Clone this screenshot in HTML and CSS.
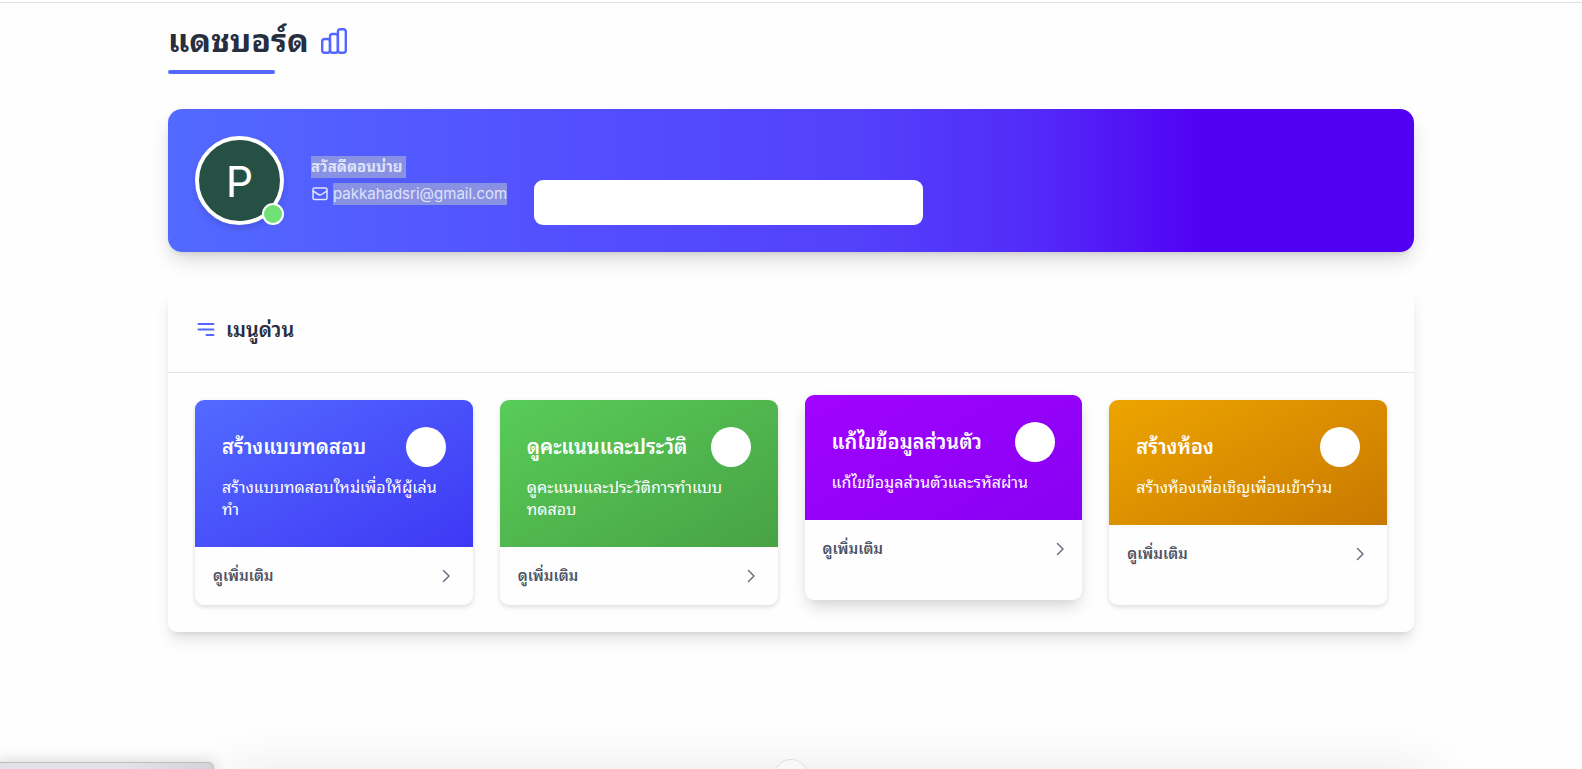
FILE: index.html
```html
<!DOCTYPE html>
<html lang="th">
<head>
<meta charset="utf-8">
<title>แดชบอร์ด</title>
<link rel="stylesheet" href="styles.css">
</head>
<body>
<div class="topbar"></div>
<main class="container">
  <header class="page-head">
    <h1 class="page-title">แดชบอร์ด
      <svg class="title-icon" viewBox="0 0 26 26" fill="none" stroke="currentColor" stroke-width="2.4"><rect x="1.200" y="11" width="7.800" height="13.800" rx="2.500"/><rect x="9" y="6" width="7.900" height="18.800" rx="2.500"/><rect x="16.900" y="1.200" width="7.900" height="23.600" rx="2.500"/></svg>
    </h1>
    <div class="underline"></div>
  </header>

  <section class="banner">
    <div class="avatar">P<span class="status"></span></div>
    <div class="who">
      <p class="line"><span class="mark greeting">สวัสดีตอนบ่าย&nbsp;</span></p>
      <p class="line"><svg class="mail" viewBox="0 0 18 18" fill="none" stroke="currentColor" stroke-width="1.5" stroke-linecap="round" stroke-linejoin="round"><rect x="2" y="3" width="14" height="11.500" rx="1.500"/><path d="M2 6 7.500 9.500Q9 10.500 10.500 9.500L16 6"/></svg><span class="mark email">pakkahadsri@gmail.com</span></p>
    </div>
    <div class="blank"></div>
  </section>

  <section class="panel">
    <h2 class="panel-head">
      <svg class="menu-icon" viewBox="0 0 22 22" fill="none" stroke="currentColor" stroke-width="2" stroke-linecap="round"><path d="M3.500 5H18.500M3.500 10.500H18.500M11.500 16H18.500"/></svg>
      เมนูด่วน
    </h2>
    <div class="cards">
      <a class="card" href="#create">
        <div class="card-top blue">
          <div class="card-row"><h3 class="card-title">สร้างแบบทดสอบ</h3><span class="disc"></span></div>
          <p class="desc">สร้างแบบทดสอบใหม่เพื่อให้ผู้เล่น<br>ทำ</p>
        </div>
        <div class="card-foot end-wide">ดูเพิ่มเติม<svg class="chevron" viewBox="0 0 18 18"><path d="M6.500 3.500 12 9 6.500 14.500"/></svg></div>
      </a>
      <a class="card" href="#scores">
        <div class="card-top green">
          <div class="card-row"><h3 class="card-title">ดูคะแนนและประวัติ</h3><span class="disc"></span></div>
          <p class="desc">ดูคะแนนและประวัติการทำแบบ<br>ทดสอบ</p>
        </div>
        <div class="card-foot end-wide">ดูเพิ่มเติม<svg class="chevron" viewBox="0 0 18 18"><path d="M6.500 3.500 12 9 6.500 14.500"/></svg></div>
      </a>
      <a class="card raised" href="#profile">
        <div class="card-top purple">
          <div class="card-row"><h3 class="card-title">แก้ไขข้อมูลส่วนตัว</h3><span class="disc"></span></div>
          <p class="desc">แก้ไขข้อมูลส่วนตัวและรหัสผ่าน</p>
        </div>
        <div class="card-foot">ดูเพิ่มเติม<svg class="chevron" viewBox="0 0 18 18"><path d="M6.500 3.500 12 9 6.500 14.500"/></svg></div>
      </a>
      <a class="card" href="#room">
        <div class="card-top orange">
          <div class="card-row"><h3 class="card-title">สร้างห้อง</h3><span class="disc"></span></div>
          <p class="desc">สร้างห้องเพื่อเชิญเพื่อนเข้าร่วม</p>
        </div>
        <div class="card-foot end-wide">ดูเพิ่มเติม<svg class="chevron" viewBox="0 0 18 18"><path d="M6.500 3.500 12 9 6.500 14.500"/></svg></div>
      </a>
    </div>
  </section>
</main>
<div class="dock-shade"></div>
<div class="status-bubble"></div>
<div class="round-handle"></div>
</body>
</html>
```
FILE: styles.css
```css
* { box-sizing: border-box; }
html, body { height: 100%; }
body {
  margin: 0;
  overflow: hidden;
  background: #fefefe;
  color: #272e3f;
  font-family: Inter, "Noto Sans Thai Looped", "Noto Looped Thai", Sarabun, Loma, Garuda, Waree, "Noto Sans Thai", sans-serif;
  font-size: 16px;
  line-height: 22px;
}
h1, h2, h3, p { margin: 0; }
.topbar { height: 3px; border-bottom: 1px solid #e2e2e4; }
.container { max-width: 1246px; margin: 0 auto; }
.page-head { padding-top: 18px; }
.page-title {
  display: flex;
  align-items: center;
  gap: 12px;
  font-size: 32px;
  line-height: 40px;
  font-weight: 700;
}
.title-icon { width: 26px; height: 26px; color: #5468ff; }
.underline {
  width: 107px;
  height: 4px;
  margin-top: 9px;
  border-radius: 2px;
  background: #5468ff;
}
.banner {
  display: flex;
  align-items: center;
  gap: 27px;
  margin-top: 35px;
  padding: 27px;
  border-radius: 14px;
  background: linear-gradient(90deg, #526aff 0%, #5352ff 28%, #5340fb 56%, #522af8 70%, #5200f4 83%, #5200f4 100%);
  box-shadow: 0 10px 20px -3px rgba(0, 0, 0, .16), 0 3px 6px -3px rgba(0, 0, 0, .14);
}
.avatar {
  position: relative;
  display: flex;
  align-items: center;
  justify-content: center;
  width: 89px;
  height: 89px;
  border: 4px solid #fff;
  border-radius: 50%;
  background: #275044;
  color: #fff;
  font-size: 43px;
  box-shadow: 0 4px 6px rgba(0, 0, 0, .12);
}
.status {
  position: absolute;
  right: -4px;
  bottom: -4px;
  width: 22px;
  height: 22px;
  border: 2px solid #fff;
  border-radius: 50%;
  background: #70e077;
}
.who { display: grid; gap: 5px; }
.line { display: flex; align-items: center; gap: 4px; color: #dfe3fb; }
.mark { background: #8991e2; font-size: 15px; }
.greeting { font-weight: 700; }
.mail { width: 18px; height: 18px; }
.blank {
  align-self: flex-end;
  width: 389px;
  height: 45px;
  border-radius: 9px;
  background: #fff;
}
.panel {
  margin-top: 36px;
  border-radius: 9px;
  background: #fefefe;
  box-shadow: 0 10px 16px -3px rgba(0, 0, 0, .12), 0 4px 6px -4px rgba(0, 0, 0, .12);
}
.panel-head {
  display: flex;
  align-items: center;
  gap: 9px;
  padding: 27px;
  border-bottom: 1px solid #e4e5e9;
  font-size: 20px;
  line-height: 30px;
  font-weight: 600;
}
.menu-icon { width: 22px; height: 22px; color: #5468ff; }
.cards {
  display: grid;
  grid-template-columns: repeat(4, minmax(0, 1fr));
  gap: 27px;
  padding: 27px;
}
.card {
  overflow: hidden;
  border-radius: 9px;
  background: #fefefe;
  color: #4c5365;
  text-decoration: none;
  box-shadow: 0 2px 5px rgba(0, 0, 0, .14);
}
.raised {
  transform: translateY(-5px);
  box-shadow: 0 9px 16px -3px rgba(0, 0, 0, .16), 0 0 8px rgba(0, 0, 0, .04);
}
.card-top { padding: 27px; color: #fff; }
.blue { background: linear-gradient(150deg, #536aff, #3e38f5); }
.green { background: linear-gradient(150deg, #58cc59, #48a244); }
.purple { background: linear-gradient(150deg, #a103ff, #8800f2); }
.orange { background: linear-gradient(150deg, #eda500, #c97800); }
.card-row {
  display: flex;
  align-items: center;
  justify-content: space-between;
  margin-bottom: 9px;
}
.card-title { font-size: 20px; line-height: 30px; font-weight: 600; white-space: nowrap; }
.disc { flex: none; width: 40px; height: 40px; border-radius: 50%; background: #fff; }
.desc { font-weight: 400; white-space: nowrap; }
.card-foot {
  display: flex;
  align-items: center;
  justify-content: space-between;
  padding: 18px 13px 18px 18px;
  font-size: 15px;
  font-weight: 600;
}
.end-wide { padding-right: 18px; }
.chevron {
  width: 18px;
  height: 18px;
  fill: none;
  stroke: #687083;
  stroke-width: 1.5;
  stroke-linecap: round;
  stroke-linejoin: round;
}
/* Overlays resting on the lower edge of the window */
.dock-shade {
  position: fixed;
  left: 230px;
  right: 150px;
  bottom: -20px;
  height: 14px;
  box-shadow: 0 0 48px 4px rgba(0, 0, 0, .12);
}
.status-bubble {
  position: fixed;
  left: -6px;
  bottom: -12px;
  width: 220px;
  height: 19px;
  border: 1px solid #bdbdbf;
  border-radius: 5px;
  background: linear-gradient(90deg, #e2e1e8 60%, #d5d3da);
  box-shadow: 0 0 16px rgba(0, 0, 0, .18);
}
.round-handle {
  position: fixed;
  left: 50%;
  bottom: -26px;
  width: 36px;
  height: 36px;
  margin-left: -18px;
  border: 1px solid #dedee0;
  border-radius: 50%;
  background: #f8f8f8;
}
```
